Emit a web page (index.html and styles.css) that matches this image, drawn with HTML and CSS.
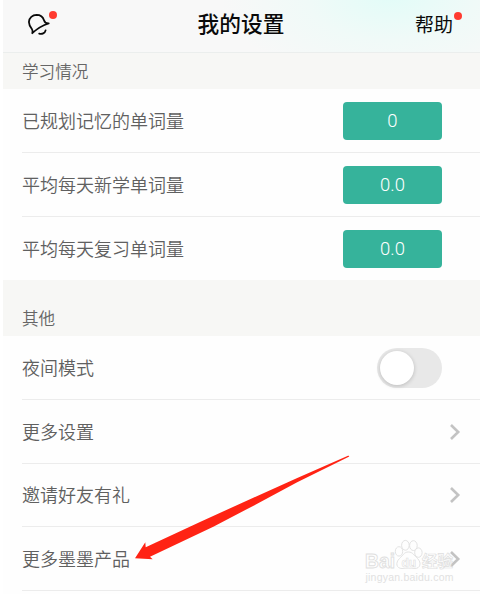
FILE: index.html
```html
<!DOCTYPE html>
<html lang="zh-CN">
<head>
  <meta charset="UTF-8" />
  <meta name="viewport" content="width=device-width, initial-scale=1.0"/>
  <title>我的设置</title>
  <link rel="stylesheet" href="styles.css">
</head>
<body>
  <div class="page">
    <header>
      <div class="bell">
        <svg width="26" height="26" viewBox="0 0 26 26" fill="none" stroke="#0a0a0a" stroke-width="1.8" stroke-linecap="round" stroke-linejoin="round">
          <path d="M7.3 21.2 C7.7 19.8 8 18.6 7 17.2 C5 14.6 3.9 12.8 3.9 10 C4.1 5.8 7.5 3 11.6 2.9 C15.8 2.9 18.1 5.4 19 8.2 C19.8 10.8 20.8 11.7 23.7 11.5 Q15 14 7.3 21.2 Z"/>
          <path d="M14.2 21.6 C17 22.5 20 21.2 20.6 18.4"/>
        </svg>
        <span class="dot"></span>
      </div>
      <h1>我的设置</h1>
      <div class="help">帮助<span class="dot"></span></div>
    </header>

    <h2>学习情况</h2>
    <div class="list">
      <div class="row"><span class="label">已规划记忆的单词量</span><span class="value">0</span></div>
      <div class="row"><span class="label">平均每天新学单词量</span><span class="value">0.0</span></div>
      <div class="row last"><span class="label">平均每天复习单词量</span><span class="value">0.0</span></div>
    </div>

    <h2 class="other">其他</h2>
    <div class="list">
      <div class="row"><span class="label">夜间模式</span><span class="switch"></span></div>
      <div class="row">
        <span class="label">更多设置</span>
        <svg class="arrow" width="12" height="18" viewBox="0 0 12 18"><path d="M2 2 L9.2 9 L2 16"/></svg>
      </div>
      <div class="row short">
        <span class="label">邀请好友有礼</span>
        <svg class="arrow" width="12" height="18" viewBox="0 0 12 18"><path d="M2 2 L9.2 9 L2 16"/></svg>
      </div>
      <div class="row">
        <span class="label">更多墨墨产品</span>
        <svg class="arrow" width="12" height="18" viewBox="0 0 12 18"><path d="M2 2 L9.2 9 L2 16"/></svg>
      </div>
    </div>

    <svg class="pointer" width="218" height="108" viewBox="0 0 218 108">
      <path fill="#ff2314" d="M1 104.3 L11.3 88.3 L11.7 93.3 L66 68 L119.3 43.7 L162.7 24.3 L214 1.8 Q216 1.6 214.8 2.7 L162.7 28.5 L126 48.3 L79.3 72.7 L16 102.7 L18.7 105.3 Z"/>
    </svg>

    <svg class="watermark" width="100" height="50" viewBox="0 0 100 50">
      <g fill="#fff" stroke="#d8d8d8" stroke-width="0.9">
        <ellipse cx="35" cy="16.4" rx="3.7" ry="4.7"/>
        <ellipse cx="41.4" cy="10.3" rx="3.8" ry="4.9"/>
        <ellipse cx="49.4" cy="10.6" rx="3.8" ry="4.9"/>
        <ellipse cx="54.4" cy="17.6" rx="3.7" ry="4.7"/>
        <path d="M44.3 17 C49 17 50 20.5 53.5 23.5 C58 28 56 33.5 51 33.5 C46 33 42 33 38 33.5 C32.5 33.5 31 28 35.5 23.5 C39 20.5 40 17 44.3 17 Z"/>
        <text class="baidu" x="1" y="33" textLength="30" lengthAdjust="spacingAndGlyphs">Bai</text>
        <text class="du" x="37.5" y="31.5">du</text>
        <text class="jingyan" x="58" y="32.2">经验</text>
        <text class="url" x="1.5" y="45.5" textLength="88">jingyan.baidu.com</text>
      </g>
    </svg>
  </div>
</body>
</html>
```

FILE: styles.css
```css
body {
  margin: 0;
  background: #fff;
  color: #666;
  font-family: Roboto, "Noto Sans CJK SC", sans-serif;
}

.page {
  position: relative;
  width: 477px;
  height: 594px;
  margin-left: 3px;
  background: #fefefe;
  overflow: hidden;
}

header {
  display: grid;
  grid-template-columns: 1fr auto 1fr;
  align-items: center;
  box-sizing: border-box;
  height: 53px;
  padding: 0 27px 2px 22px;
  border-bottom: 1px solid #ebeeed;
  background: radial-gradient(ellipse 170px 90px at 388px -5px, #e2fcf8, #f0faf8 50%, #f8f8f8);
  color: #0a0a0a;
}

h1 {
  margin: 0;
  padding-left: 4px;
  font-size: 21.7px;
  font-weight: 500;
  line-height: 50px;
}

.bell {
  position: relative;
  height: 26px;
}

.bell svg {
  display: block;
}

.help {
  position: relative;
  justify-self: end;
  padding-top: 2px;
  font-size: 19px;
  line-height: 48px;
}

.dot {
  position: absolute;
  width: 8px;
  height: 8px;
  border-radius: 50%;
  background: #ff3b30;
}

.bell .dot {
  left: 24px;
  top: -1px;
}

.help .dot {
  right: -9px;
  top: 12px;
}

h2 {
  box-sizing: border-box;
  height: 36px;
  margin: 0;
  padding-left: 19px;
  background: #f7f7f5;
  font-size: 16.6px;
  font-weight: 350;
  line-height: 40px;
}

h2.other {
  height: 56px;
  padding-top: 20px;
}

.row {
  display: flex;
  align-items: center;
  justify-content: space-between;
  box-sizing: border-box;
  height: 64px;
  margin-left: 19px;
  padding-right: 38px;
  border-bottom: 1px solid #ececec;
  font-size: 18px;
}

.row.last {
  height: 63px;
  border-bottom: none;
}

.row.short {
  height: 63px;
}

.label {
  padding-bottom: 2px;
  color: #606060;
  font-weight: 350;
}

.value {
  width: 99px;
  height: 38px;
  border-radius: 4px;
  background: #36b39b;
  color: #fff;
  font-size: 18.5px;
  font-weight: 350;
  line-height: 39px;
  text-align: center;
}

.switch {
  width: 65px;
  height: 40px;
  border-radius: 20px;
  background: #e8e8e8;
}

.switch::before {
  content: "";
  display: block;
  width: 34px;
  height: 34px;
  margin: 3px;
  border-radius: 50%;
  background: #fff;
  box-shadow: 0 1px 4px rgba(0, 0, 0, 0.2);
}

.arrow {
  margin-right: -19px;
  fill: none;
  stroke: #c3c3c3;
  stroke-width: 2.6;
}

.pointer {
  position: absolute;
  left: 131px;
  top: 454px;
}

.watermark {
  position: absolute;
  left: 361px;
  top: 535px;
  opacity: 0.8;
}

.watermark text {
  font-family: "Liberation Sans", "Noto Sans CJK SC", sans-serif;
  font-weight: bold;
}

.baidu {
  font-size: 20px;
}

.watermark .du {
  font-size: 12px;
  stroke-width: 0.6;
}

.jingyan {
  font-size: 15.5px;
  stroke-width: 0.7;
}

.watermark .url {
  font-size: 10.5px;
  font-weight: normal;
  stroke: none;
  fill: #dadada;
}
```
